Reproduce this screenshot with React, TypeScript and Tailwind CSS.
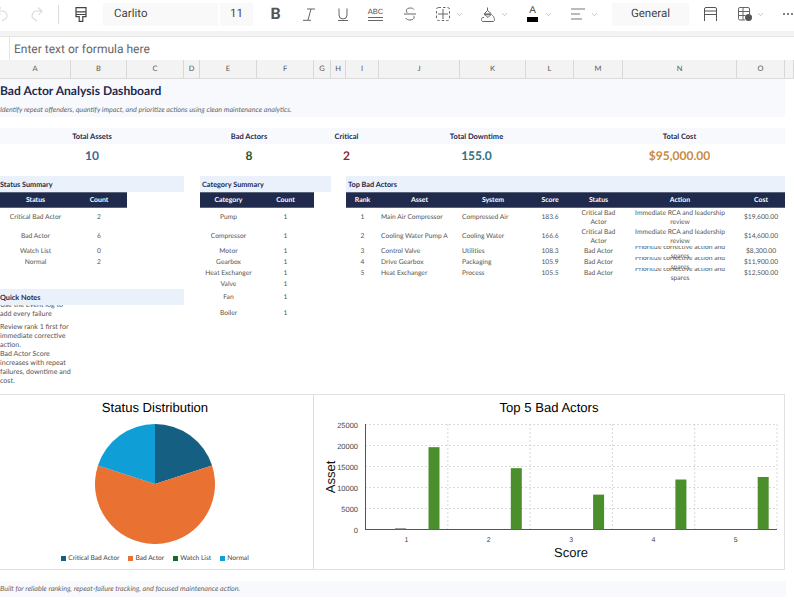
import React from "react";
import { ChevronDown } from "lucide-react";

const colHeads: [string, string][] = [
  ["A", "w-[71px]"], ["B", "w-[56px]"], ["C", "w-[57px]"], ["D", "w-[16px]"], ["E", "w-[57px]"],
  ["F", "w-[57px]"], ["G", "w-[17px]"], ["H", "w-[15px]"], ["I", "w-[33px]"], ["J", "w-[81px]"],
  ["K", "w-[66px]"], ["L", "w-[48px]"], ["M", "w-[49px]"], ["N", "w-[114px]"], ["O", "w-[48px]"], ["", "flex-1"],
];

const Chev = ({ cls }: { cls: string }) => <ChevronDown size={9} strokeWidth={1.3} className={`text-[#8a8a8a] shrink-0 ${cls}`} />;

function Toolbar() {
  return (
    <div className="h-[31px] pb-[3px] flex items-center bg-white text-[#444] overflow-hidden shrink-0 font-['Roboto',sans-serif]">
      <svg width="13" height="15" viewBox="0 0 13 15" fill="none" stroke="#dadada" strokeWidth="1.100" className="-ml-[4px] shrink-0">
        <path d="M1 4h6a5 5 0 0 1 3.500 7L6 14M5 0.500L1 4l3.500 4" />
      </svg>
      <svg width="13" height="15" viewBox="0 0 13 15" fill="none" stroke="#dadada" strokeWidth="1.100" className="ml-[21px] shrink-0">
        <path d="M12 4H6a5 5 0 0 0-3.500 7L7 14M8 0.500L12 4 8.500 8" />
      </svg>
      <span className="w-px h-[19px] bg-[#dcdcdc] ml-[15px] shrink-0" />
      <svg width="12" height="15" viewBox="0 0 12 15" fill="none" stroke="#444" strokeWidth="1.200" className="ml-[16px] shrink-0">
        <path d="M1 .7h10v6.800H1zM1 4.800h10M1 7.500v2.200h3.200v4.700h3.600V9.700H11V7.500" />
      </svg>
      <div className="ml-[16px] w-[115px] h-[23px] bg-[#f9f9f9] flex items-center pl-[11px] text-[11.500px] shrink-0">Carlito</div>
      <div className="ml-[2px] w-[33px] h-[23px] bg-[#f9f9f9] flex items-center justify-center text-[11.500px] shrink-0">11</div>
      <span className="ml-[18px] w-[9px] flex justify-center font-bold text-[16px] leading-none text-[#555] shrink-0">B</span>
      <svg width="12" height="13" viewBox="0 0 12 13" fill="none" stroke="#666" strokeWidth="1" className="ml-[23px] shrink-0">
        <path d="M4 1h8M8 1L5 12M0 12.300h8" />
      </svg>
      <svg width="10" height="13" viewBox="0 0 10 13" fill="none" stroke="#666" strokeWidth="1" className="ml-[23px] shrink-0">
        <path d="M1 .5v6.500a4 4 0 0 0 8 0V.5M0 12.500h10" />
      </svg>
      <div className="ml-[20px] w-[15px] flex flex-col items-center text-[7.500px] leading-[8px] font-['Liberation_Sans'] text-[#555] shrink-0">
        <span>ABC</span>
        <span className="w-full h-px bg-[#666] mt-[1px]" />
        <span className="w-full h-px bg-[#666] mt-[2px]" />
      </div>
      <svg width="12" height="14" viewBox="0 0 12 14" fill="none" stroke="#666" strokeWidth="1" className="ml-[21px] shrink-0">
        <path d="M10 2.500C9.200 1.400 8 1 6.300 1 4 1 2.300 2 2.300 3.800c0 .8.400 1.500 1 2M0 7h12M9.600 8.800c.3.400.5.900.5 1.400C10.100 12 8.300 13 6 13c-2 0-3.500-.7-4.200-2" />
      </svg>
      <svg width="14" height="14" viewBox="0 0 14 14" fill="none" stroke="#666" strokeWidth="1" className="ml-[20px] shrink-0">
        <path d="M2 7h10M7 2v10" />
        <rect x=".5" y=".5" width="13" height="13" rx="2" strokeDasharray="2.500 2" />
      </svg>
      <Chev cls="ml-[5px]" />
      <svg width="14" height="15" viewBox="0 0 14 15" fill="none" stroke="#666" strokeWidth="1" className="ml-[17px] shrink-0">
        <path d="M6.500 .5v3M3 7l3.500-3.500L10.500 7 7 10.500z" />
        <path d="M3.500 7.300h6.500" strokeWidth="2" stroke="#777" />
        <path d="M11 8c1 .8 1.800 1.700 1.800 2.500 1 1 1 3.500-.3 4H1.500c-1.300-.5-1.300-3.500 0-4H3" />
      </svg>
      <Chev cls="ml-[5px]" />
      <div className="ml-[18px] w-[11px] flex flex-col items-center shrink-0">
        <span className="text-[10px] leading-[10px] text-[#444] font-['Liberation_Sans']">A</span>
        <span className="w-full h-[5px] bg-black mt-[1px]" />
      </div>
      <Chev cls="ml-[6px]" />
      <svg width="14" height="12" viewBox="0 0 14 12" fill="none" stroke="#777" strokeWidth="1" className="ml-[18px] shrink-0">
        <path d="M0 1h14M0 6h9M0 11h11" />
      </svg>
      <Chev cls="ml-[5px]" />
      <div className="ml-[13px] w-[77px] h-[23px] bg-[#f9f9f9] flex items-center justify-center text-[11.500px] shrink-0">General</div>
      <svg width="13" height="14" viewBox="0 0 13 14" fill="none" stroke="#555" strokeWidth="1" className="ml-[15px] shrink-0">
        <path d="M.5 14V2A1.500 1.500 0 0 1 2 .5h9A1.500 1.500 0 0 1 12.500 2v12M.5 4h12M.5 7.500h12" />
      </svg>
      <svg width="14" height="14" viewBox="0 0 14 14" fill="none" stroke="#666" strokeWidth="1" className="ml-[21px] shrink-0">
        <path d="M7 13H2a1.500 1.500 0 0 1-1.500-1.500V2A1.500 1.500 0 0 1 2 .5h8A1.500 1.500 0 0 1 11.500 2v5M.5 4.500h11M.5 8.500h7M5 .5V13" />
        <circle cx="10.500" cy="10.500" r="3.500" fill="#555" stroke="none" />
      </svg>
      <Chev cls="ml-[4px]" />
      <span className="ml-[18px] flex gap-[2px] shrink-0">
        <span className="w-[2px] h-[2px] rounded-full bg-[#555]" />
        <span className="w-[2px] h-[2px] rounded-full bg-[#555]" />
        <span className="w-[2px] h-[2px] rounded-full bg-[#555]" />
      </span>
    </div>
  );
}

const headCls = "bg-[#1f2a4d] text-white font-bold text-[6.900px] flex items-center justify-center border-y border-[#5b6478]";
const cCls = "flex items-center justify-center text-center";
const lCls = "flex items-center pl-[2px] whitespace-nowrap";
const sectionCls = "bg-[#eaf1fb] text-[#1f2a4d] font-bold text-[7.300px] flex items-center whitespace-nowrap pt-[1px]";
const kpiLabel = "text-[#1f2a4d] font-bold text-[7.500px] flex items-center justify-center whitespace-nowrap";
const kpiValue = "font-bold text-[12px] flex items-center justify-center";

const catRows: [string, string][] = [
  ["Pump", "row-start-9"],
  ["Compressor", "row-start-10"],
  ["Motor", "row-start-11"],
  ["Gearbox", "row-start-12"],
  ["Heat Exchanger", "row-start-13"],
  ["Valve", "row-start-14"],
  ["Fan", "row-start-15"],
  ["Boiler", "row-start-16"],
];

const statusRows: [string, string, string][] = [
  ["Critical Bad Actor", "2", "row-start-9"],
  ["Bad Actor", "6", "row-start-10"],
  ["Watch List", "0", "row-start-11"],
  ["Normal", "2", "row-start-12"],
];

const topRows = [
  { rank: "1", asset: "Main Air Compressor", system: "Compressed Air", score: "183.6", status: "Critical Bad Actor", action: "Immediate RCA and leadership review", cost: "$19,600.00", row: "row-start-9", tight: false },
  { rank: "2", asset: "Cooling Water Pump A", system: "Cooling Water", score: "166.6", status: "Critical Bad Actor", action: "Immediate RCA and leadership review", cost: "$14,600.00", row: "row-start-10", tight: false },
  { rank: "3", asset: "Control Valve", system: "Utilities", score: "108.3", status: "Bad Actor", action: "Prioritize corrective action and spares", cost: "$8,300.00", row: "row-start-11", tight: true },
  { rank: "4", asset: "Drive Gearbox", system: "Packaging", score: "105.9", status: "Bad Actor", action: "Prioritize corrective action and spares", cost: "$11,900.00", row: "row-start-12", tight: true },
  { rank: "5", asset: "Heat Exchanger", system: "Process", score: "105.5", status: "Bad Actor", action: "Prioritize corrective action and spares", cost: "$12,500.00", row: "row-start-13", tight: true },
];

function Sheet() {
  return (
    <div className="grid grid-cols-[71px_56px_57px_16px_57px_57px_17px_15px_33px_81px_66px_48px_49px_114px_48px] grid-rows-[22px_16px_11px_16px_22px_10px_16px_16px_19.500px_18.500px_11px_11px_11px_10px_16px_17px_23px_49px] text-[6.700px] leading-[9px] text-[#555] shrink-0">
      <div className="col-start-1 col-end-16 row-start-1 bg-[#f8f9fd] text-[#1f2a4d] font-bold text-[12.100px] flex items-center whitespace-nowrap">Bad Actor Analysis Dashboard</div>
      <div className="col-start-1 col-end-16 row-start-2 bg-[#f8f9fd] text-[#666] italic text-[7.150px] flex items-center whitespace-nowrap">Identify repeat offenders, quantify impact, and prioritize actions using clean maintenance analytics.</div>

      <div className={`col-start-1 col-end-4 row-start-4 bg-[#f8f9fd] ${kpiLabel}`}>Total Assets</div>
      <div className={`col-start-4 col-end-7 row-start-4 bg-[#f8f9fd] ${kpiLabel}`}>Bad Actors</div>
      <div className={`col-start-7 col-end-10 row-start-4 bg-[#f8f9fd] ${kpiLabel}`}>Critical</div>
      <div className={`col-start-10 col-end-13 row-start-4 bg-[#f8f9fd] ${kpiLabel}`}>Total Downtime</div>
      <div className={`col-start-13 col-end-16 row-start-4 bg-[#f8f9fd] ${kpiLabel}`}>Total Cost</div>
      <div className={`col-start-1 col-end-4 row-start-5 text-[#3d6391] ${kpiValue}`}>10</div>
      <div className={`col-start-4 col-end-7 row-start-5 text-[#27562f] ${kpiValue}`}>8</div>
      <div className={`col-start-7 col-end-10 row-start-5 text-[#8c2531] ${kpiValue}`}>2</div>
      <div className={`col-start-10 col-end-13 row-start-5 text-[#2f6f80] ${kpiValue}`}>155.0</div>
      <div className={`col-start-13 col-end-16 row-start-5 text-[#c98a3f] ${kpiValue}`}>$95,000.00</div>

      <div className={`col-start-1 col-end-4 row-start-7 ${sectionCls}`}>Status Summary</div>
      <div className={`col-start-5 col-end-8 row-start-7 pl-[2px] ${sectionCls}`}>Category Summary</div>
      <div className={`col-start-9 col-end-16 row-start-7 pl-[2px] ${sectionCls}`}>Top Bad Actors</div>

      <div className={`col-start-1 row-start-8 ${headCls}`}>Status</div>
      <div className={`col-start-2 row-start-8 ${headCls}`}>Count</div>
      <div className={`col-start-5 row-start-8 ${headCls}`}>Category</div>
      <div className={`col-start-6 row-start-8 ${headCls}`}>Count</div>
      <div className={`col-start-9 row-start-8 ${headCls}`}>Rank</div>
      <div className={`col-start-10 row-start-8 ${headCls}`}>Asset</div>
      <div className={`col-start-11 row-start-8 ${headCls}`}>System</div>
      <div className={`col-start-12 row-start-8 ${headCls}`}>Score</div>
      <div className={`col-start-13 row-start-8 ${headCls}`}>Status</div>
      <div className={`col-start-14 row-start-8 ${headCls}`}>Action</div>
      <div className={`col-start-15 row-start-8 ${headCls}`}>Cost</div>

      {statusRows.map(([name, n, r]) => (
        <React.Fragment key={name}>
          <div className={`col-start-1 ${r} ${cCls}`}>{name}</div>
          <div className={`col-start-2 ${r} ${cCls}`}>{n}</div>
        </React.Fragment>
      ))}
      {catRows.map(([name, r]) => (
        <React.Fragment key={name}>
          <div className={`col-start-5 ${r} ${cCls}`}>{name}</div>
          <div className={`col-start-6 ${r} ${cCls}`}>1</div>
        </React.Fragment>
      ))}
      {topRows.map((r) => (
        <React.Fragment key={r.rank}>
          <div className={`col-start-9 ${r.row} ${cCls}`}>{r.rank}</div>
          <div className={`col-start-10 ${r.row} ${lCls}`}>{r.asset}</div>
          <div className={`col-start-11 ${r.row} ${lCls}`}>{r.system}</div>
          <div className={`col-start-12 ${r.row} ${cCls}`}>{r.score}</div>
          <div className={`col-start-13 ${r.row} ${cCls}`}>{r.status}</div>
          <div className={`col-start-14 ${r.row} ${cCls} px-[8px] ${r.tight ? "h-[11px] [clip-path:inset(0_0_-3px_0)]" : ""}`}>{r.action}</div>
          <div className={`col-start-15 ${r.row} ${cCls}`}>{r.cost}</div>
        </React.Fragment>
      ))}

      <div className={`col-start-1 col-end-4 row-start-15 ${sectionCls}`}>Quick Notes</div>
      <div className="col-start-1 row-start-16 overflow-hidden text-[7.100px]">
        <div className="-mt-[5px]">Use the Event log to add every failure</div>
      </div>
      <div className="col-start-1 row-start-17 text-[7.100px]">Review rank 1 first for immediate corrective action.</div>
      <div className="col-start-1 row-start-18 pt-[4px] text-[7.100px]">Bad Actor Score increases with repeat failures, downtime and cost.</div>
    </div>
  );
}

function PieChart() {
  return (
    <div className="w-[314px] pr-[3px] border-r border-[#dedede] flex flex-col items-center">
      <div className="mt-[4px] font-['Liberation_Sans'] text-[13.100px] leading-[18px] text-black">Status Distribution</div>
      <svg width="120" height="120" viewBox="-60 -60 120 120" className="mt-[7px] shrink-0">
        <path d="M0 0L0 -60A60 60 0 0 1 57.060 -18.540Z" fill="#156082" />
        <path d="M0 0L57.060 -18.540A60 60 0 1 1 -57.060 -18.540Z" fill="#e97132" />
        <path d="M0 0L-57.060 -18.540A60 60 0 0 1 0 -60Z" fill="#0f9ed5" />
      </svg>
      <div className="mt-[10px] flex items-center text-[6.650px] leading-[9px] text-[#444]">
        <span className="w-[5px] h-[5px] bg-[#156082] mr-[2px]" />Critical Bad Actor
        <span className="w-[5px] h-[5px] bg-[#e97132] ml-[9px] mr-[2px]" />Bad Actor
        <span className="w-[5px] h-[5px] bg-[#196b24] ml-[9px] mr-[2px]" />Watch List
        <span className="w-[5px] h-[5px] bg-[#0f9ed5] ml-[9px] mr-[2px]" />Normal
      </div>
    </div>
  );
}

function BarChart() {
  const vals = [19600, 14600, 8300, 11900, 12500];
  return (
    <div className="w-[471px] flex flex-col items-center border-r border-[#e2e2e2]">
      <div className="mt-[4px] font-['Liberation_Sans'] text-[13.100px] leading-[18px] text-black">Top 5 Bad Actors</div>
      <svg width="471" height="148" viewBox="0 0 471 148" className="font-['Liberation_Sans'] mt-[4px] shrink-0">
        {[0, 1, 2, 3, 4, 5].map((i) => (
          <g key={i}>
            <line x1="51" x2="463" y1={3.500 + i * 21} y2={3.500 + i * 21} stroke={i === 5 ? "#555" : "#cfcfcf"} strokeWidth={i === 5 ? 1 : 0.8} strokeDasharray={i === 5 ? undefined : "2 2"} />
            <text x="44" y={6.500 + i * 21} textAnchor="end" fontSize="7.500" fill="#444">{25000 - i * 5000}</text>
          </g>
        ))}
        <line x1="51.500" x2="51.500" y1="3" y2="108" stroke="#555" />
        {[1, 2, 3, 4, 5].map((i) => (
          <line key={i} x1={51.500 + i * 82.300} x2={51.500 + i * 82.300} y1="3" y2="108" stroke="#cfcfcf" strokeWidth="0.800" strokeDasharray="2 2" />
        ))}
        {vals.map((v, i) => {
          const h = (v / 25000) * 105;
          return (
            <g key={i}>
              <rect x={114.500 + i * 82.300} y={108.500 - h} width="11" height={h} fill="#4a8f2c" />
              <text x={92.500 + i * 82.300} y="121" textAnchor="middle" fontSize="7" fill="#444">{i + 1}</text>
            </g>
          );
        })}
        <rect x="81" y="107.200" width="11" height="1" fill="#888" />
        <text x="257" y="136" textAnchor="middle" fontSize="13" fill="#111">Score</text>
        <text transform="translate(21 56) rotate(-90)" textAnchor="middle" fontSize="13" fill="#111">Asset</text>
      </svg>
    </div>
  );
}

export default function App() {
  return (
    <div className="w-[794px] h-[602px] overflow-hidden bg-white font-['Lato','Open_Sans',sans-serif] [text-rendering:geometricPrecision] flex flex-col">
      <Toolbar />
      <div className="h-[6px] bg-[#f3f3f3] border-b border-[#e6e6e6] shrink-0" />
      <div className="h-[23px] flex items-center bg-white shrink-0 font-['Roboto',sans-serif]">
        <span className="w-[10px] h-full border-r border-[#e6e6e6]" />
        <span className="ml-[4px] text-[12px] text-[#666]">Enter text or formula here</span>
      </div>
      <div className="h-[19px] flex bg-[#f3f3f3] border-b border-[#dcdcdc] text-[7.500px] text-[#555] shrink-0">
        {colHeads.map(([h, w], i) => (
          <div key={i} className={`${w} border-r border-[#d8d8d8] flex items-center justify-center`}>{h}</div>
        ))}
      </div>
      <Sheet />
      <div className="h-[176px] w-[785px] border-y border-[#e2e2e2] flex shrink-0">
        <PieChart />
        <BarChart />
      </div>
      <div className="mt-[11px] h-[16px] w-[786px] bg-[#f8f9fd] flex items-center text-[#666] italic text-[7.150px] whitespace-nowrap shrink-0">Built for reliable ranking, repeat-failure tracking, and focused maintenance action.</div>
    </div>
  );
}
